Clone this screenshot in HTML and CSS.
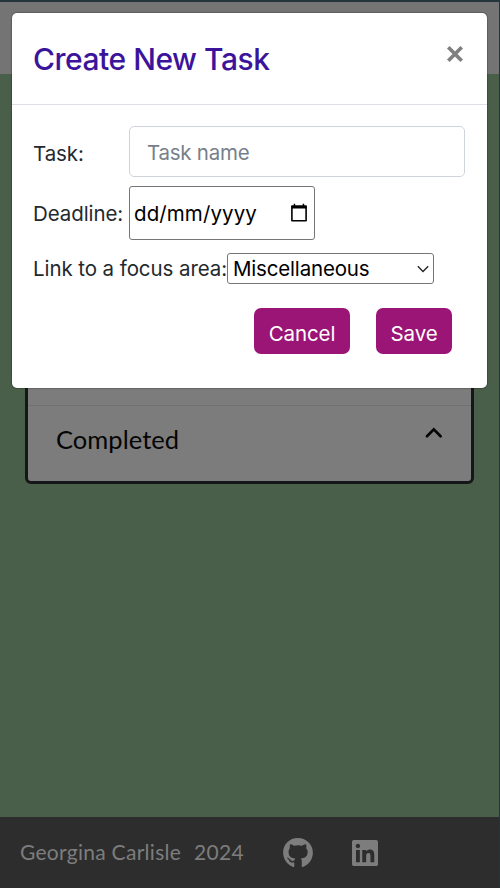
FILE: index.html
```html
<!DOCTYPE html>
<html lang="en">
<head>
<meta charset="utf-8">
<title>Tasks</title>
<link rel="stylesheet" href="styles.css">
</head>
<body>
<div class="page">
  <header class="topbar"></header>
  <main class="main">
    <section class="card">
      <div class="card-row card-body"></div>
      <div class="card-row completed">
        <h2>Completed</h2>
        <svg class="chevron" viewBox="0 0 18 12"><path d="M2 9.200 8.800 2.400l6.800 6.800" fill="none" stroke="#050505" stroke-width="2.700" stroke-linecap="round"/></svg>
      </div>
    </section>
  </main>
  <footer class="footer">
    <span class="author">Georgina Carlisle</span>
    <span class="year">2024</span>
    <svg class="github" viewBox="0 8 496 484"><path fill="currentColor" d="M165.900 397.400c0 2-2.300 3.600-5.200 3.600-3.300.3-5.600-1.300-5.600-3.600 0-2 2.300-3.600 5.200-3.600 3-.3 5.600 1.300 5.600 3.600zM244.800 8C106.100 8 0 113.300 0 252c0 110.900 69.800 205.800 169.500 239.200 12.800 2.300 17.300-5.600 17.300-12.100 0-6.200-.3-40.400-.3-61.400 0 0-70 15-84.700-29.800 0 0-11.400-29.100-27.800-36.600 0 0-22.900-15.700 1.600-15.400 0 0 24.900 2 38.600 25.800 21.900 38.600 58.600 27.500 72.900 20.900 2.300-16 8.800-27.100 16-33.700-55.900-6.200-112.300-14.300-112.300-110.500 0-27.500 7.600-41.300 23.600-58.900-2.600-6.500-11.100-33.300 2.600-67.900 20.900-6.500 69 27 69 27 20-5.600 41.500-8.500 62.800-8.500s42.800 2.900 62.800 8.500c0 0 48.100-33.600 69-27 13.700 34.700 5.200 61.400 2.600 67.900 16 17.700 25.800 31.500 25.800 58.900 0 96.500-58.900 104.200-114.800 110.500 9.200 7.900 17 22.900 17 46.400 0 33.700-.3 75.400-.3 83.600 0 6.500 4.600 14.400 17.300 12.100C428.200 457.800 496 362.900 496 252 496 113.300 383.500 8 244.800 8z"/></svg>
    <svg class="linkedin" viewBox="0 32 448 448"><path fill="currentColor" d="M416 32H31.900C14.300 32 0 46.500 0 64.300v383.400C0 465.500 14.300 480 31.900 480H416c17.600 0 32-14.500 32-32.300V64.300c0-17.800-14.400-32.300-32-32.300zM135.400 416H69V202.200h66.500V416zm-33.200-243c-21.300 0-38.500-17.300-38.500-38.500S80.900 96 102.200 96c21.200 0 38.500 17.300 38.500 38.500 0 21.300-17.200 38.500-38.500 38.500zm282.100 243h-66.400V312c0-24.800-.5-56.700-34.500-56.700-34.600 0-39.900 27-39.900 54.900V416h-66.400V202.200h63.700v29.200h.9c8.900-16.800 30.600-34.500 62.900-34.500 67.200 0 79.700 44.300 79.700 101.900V416z"/></svg>
  </footer>
</div>
<div class="modal">
  <div class="modal-header">
    <h1>Create New Task</h1>
    <svg class="close" viewBox="0 0 18 18"><path d="M2.300 2.300 15.700 15.700M15.700 2.300 2.300 15.700" stroke="#7f7f7f" stroke-width="3.700" stroke-linecap="butt"/></svg>
  </div>
  <div class="modal-body">
    <div class="row task"><span class="label">Task:</span><div class="input"><span>Task name</span></div></div>
    <div class="row deadline"><span class="label">Deadline:</span><div class="date"><span>dd/mm/yyyy</span>
      <svg class="calendar" viewBox="0 0 18 20"><path d="M1.900 3.200h14.200v14.600H1.900z" fill="none" stroke="#000" stroke-width="1.600" stroke-linejoin="round"/><path d="M1.500 2.500h15V5.500h-15zM3.700.8h1.500V3H3.700zM12.700.8h1.500V3h-1.500z"/></svg>
    </div></div>
    <div class="row focus"><span class="link-label">Link to a focus area:</span><div class="select"><span>Miscellaneous</span>
      <svg class="arrow" viewBox="0 0 12 8"><path d="m.8 1.300 5.200 5.200 5.200-5.200" fill="none" stroke="#222" stroke-width="1.300"/></svg>
    </div></div>
    <div class="actions"><button class="cancel"><span>Cancel</span></button><button class="save"><span>Save</span></button></div>
  </div>
</div>
</body>
</html>
```
FILE: styles.css
```css
* { box-sizing: border-box; }
body { margin: 0; width: 500px; height: 888px; overflow: hidden; position: relative; font-family: Inter, sans-serif; color: #24292e; }
svg { display: block; flex: none; }
span { white-space: nowrap; }
h1, h2 { margin: 0; font-weight: 400; }
.page { height: 888px; display: flex; flex-direction: column; border-top: 2px solid #24343b; border-right: 1px solid #24343b; background: #4a5f4a; font-family: Lato, sans-serif; }
.topbar { height: 72px; background: #747474; }
.main { flex: 1; padding: 216px 25px 0; }
.card { width: 449px; height: 194px; border: 3px solid #151617; border-radius: 6px; background: #7c7c7c; display: flex; flex-direction: column; overflow: hidden; }
.card-body { height: 113px; border-bottom: 1px solid #707070; }
.completed { flex: 1; display: flex; justify-content: space-between; padding: 16px 28px 0; }
.completed h2 { font-size: 25.5px; line-height: 34px; color: #050505; letter-spacing: .05px; }
.chevron { width: 18px; height: 12px; margin-top: 5px; }
.footer { height: 71px; background: #2d2d2d; color: #7d7d7d; display: flex; align-items: center; padding-left: 20px; font-size: 21px; }
.footer span { padding-bottom: 2px; }
.author { width: 174px; letter-spacing: .28px; }
.year { width: 89px; letter-spacing: .28px; }
.github { width: 30px; height: 29px; margin-right: 39px; }
.linkedin { width: 26px; height: 26px; }
.modal { position: absolute; left: 12px; top: 13px; width: 475px; height: 375px; background: #fff; border-radius: 5px; box-shadow: 0 0 1px 1px rgba(0,0,0,.2); overflow: hidden; }
.modal-header { height: 92px; border-bottom: 1px solid #dcdfe8; display: flex; justify-content: space-between; padding: 26px 23px 0 21px; }
.modal-header h1 { font-size: 30px; line-height: 40px; font-weight: 500; color: #3b149b; letter-spacing: -.47px; }
.close { width: 18px; height: 18px; margin-top: 6px; }
.modal-body { padding: 21px 22px 0 21px; font-size: 20.5px; line-height: 28px; letter-spacing: -.08px; }
.row { display: flex; align-items: center; }
.label { width: 96px; padding-top: 2px; }
.task { height: 51px; }
.task .label { padding-top: 4px; }
.input { flex: 1; height: 51px; border: 1px solid #ced4da; border-radius: 5px; padding: 12px 17px; color: #77808a; letter-spacing: -.25px; }
.deadline { height: 54px; margin-top: 9px; }
.date { width: 186px; height: 54px; border: 1px solid #767676; border-radius: 3px; display: flex; align-items: center; justify-content: space-between; padding: 0 6px 0 4px; color: #000; letter-spacing: .1px; }
.date span { padding-top: 2px; }
.calendar { width: 18px; height: 20px; }
.focus { height: 31px; margin-top: 13px; }
.link-label { width: 194px; padding-top: 1px; }
.select { width: 207px; height: 31px; border: 1px solid #767676; border-radius: 3px; display: flex; align-items: center; justify-content: space-between; padding: 0 4px 0 5px; color: #000; letter-spacing: -.18px; }
.select span { padding-top: 1px; }
.arrow { width: 12px; height: 8px; }
.actions { display: flex; justify-content: flex-end; gap: 26px; margin: 24px 13px 0 0; }
button { height: 46px; border: 0; border-radius: 7px; background: #9b1577; color: #fff; font: 20.500px/28px Inter, sans-serif; letter-spacing: -.12px; padding: 5px 0 0; }
.cancel { width: 96px; }
.save { width: 76px; }
```
